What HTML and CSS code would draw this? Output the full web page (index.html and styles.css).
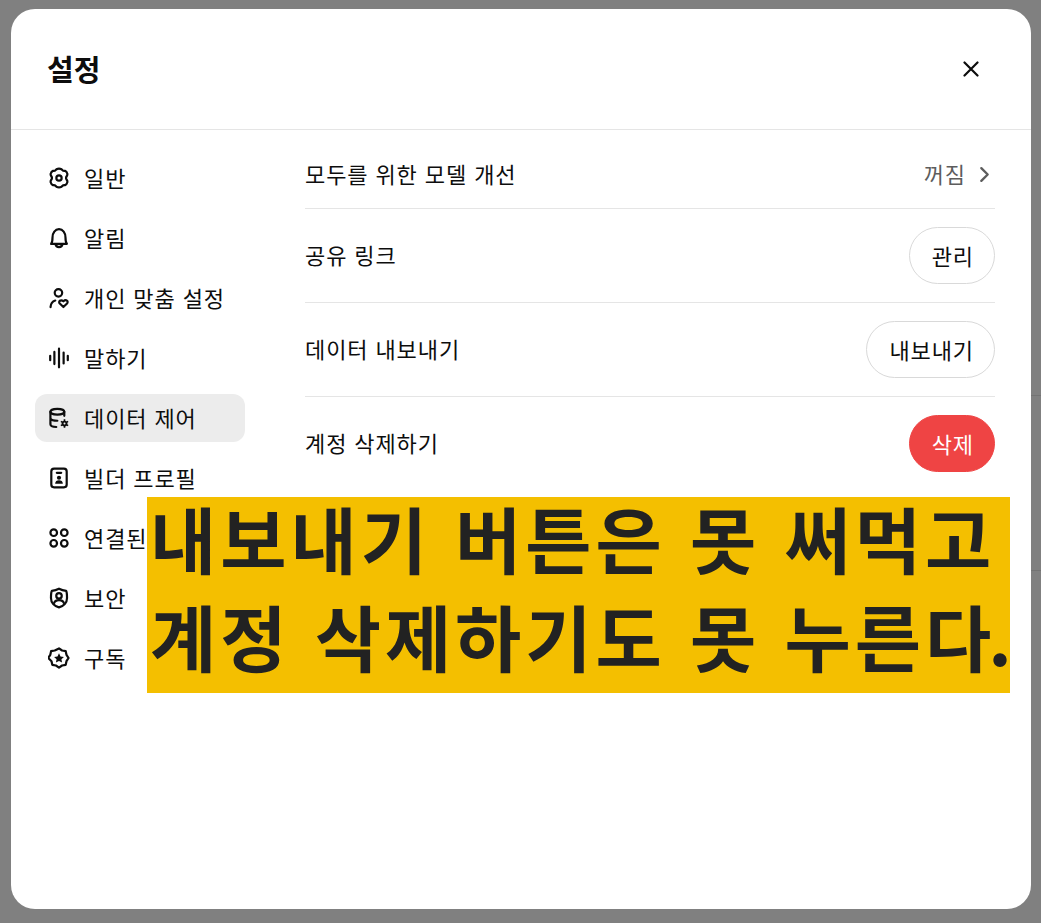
FILE: index.html
```html
<!DOCTYPE html>
<html lang="ko">
<head>
<meta charset="utf-8">
<title>설정</title>
<link rel="stylesheet" href="styles.css">
</head>
<body>
<div class="backdrop">
  <div class="bg-line bg-line-a"></div>
  <div class="bg-line bg-line-b"></div>
  <section class="modal">
    <header class="modal-head">
      <h1>설정</h1>
      <svg class="close" viewBox="0 0 16 16" width="16" height="16" fill="none" stroke="#0d0d0d" stroke-width="2.200" stroke-linecap="round"><path d="M1.500 1.500 14.500 14.500M14.500 1.500 1.500 14.500"/></svg>
    </header>
    <div class="modal-body">
      <nav class="side">
        <a class="nav-item"><svg class="ico" viewBox="0 0 20 20"><path d="M7.700 2.100c1.500-.8 3.100-.8 4.600 0l1 .9c.6.500 1.400.4 2.200.5 1 .3 1.600 1 2 2.400.3 1 .1 1.600-.4 2.300-.7.900-.7 2.700 0 3.600.5.700.7 1.300.4 2.300-.4 1.400-1 2.100-2 2.400-.8.100-1.600 0-2.200.5l-1 .9c-1.500.8-3.100.8-4.600 0l-1-.9c-.6-.5-1.400-.4-2.200-.5-1-.3-1.600-1-2-2.400-.3-1-.1-1.600.4-2.300.7-.9.7-2.700 0-3.600-.5-.7-.7-1.300-.4-2.300.4-1.400 1-2.100 2-2.400.8-.1 1.600 0 2.200-.5z" stroke-linejoin="round"/><circle cx="10" cy="10" r="2.400"/></svg><span>일반</span></a>
        <a class="nav-item"><svg class="ico" viewBox="0 0 20 20"><path d="M2.800 15.300h14.400c-1-1.200-1.300-2.700-1.300-5.800 0-4.300-2.400-7.500-5.900-7.500S4.100 5.200 4.100 9.500c0 3.100-.3 4.600-1.300 5.800z" stroke-linejoin="round"/><path d="M6.800 15.500c.3 1.800 1.500 2.800 3.200 2.800s2.900-1 3.200-2.800"/></svg><span>알림</span></a>
        <a class="nav-item"><svg class="ico" viewBox="0 0 20 20"><circle cx="9.500" cy="5.300" r="3.400"/><path d="M2.300 18.300c.2-3 1.700-5.200 4.300-6" stroke-linecap="round"/><path d="M14 18.200l-3.300-3.200c-1.700-1.800.9-4.200 3.300-2 2.400-2.200 5-.2 3.300 2z" stroke-linejoin="round"/></svg><span>개인 맞춤 설정</span></a>
        <a class="nav-item"><svg class="ico" viewBox="0 0 20 20"><path d="M2 8v4M5.800 4.500v11M10 1.500v17M14.200 5v10M18 8v4" stroke-linecap="round"/></svg><span>말하기</span></a>
        <a class="nav-item active"><svg class="ico" viewBox="0 0 20 20"><ellipse cx="8.500" cy="4.300" rx="6.300" ry="2.600"/><path d="M2.200 4.300v11.400c0 1.400 2 2.400 5.300 2.500M14.800 4.300v3.700M2.200 10.500c.8 1.300 3 2 6.300 2" stroke-linecap="round"/><circle class="solid" cx="15" cy="15" r="2.600"/><path d="M15 11.200v7.600M11.700 13.100l6.600 3.800M18.300 13.100l-6.600 3.800" stroke-width="1.500"/><circle class="hole" cx="15" cy="15" r=".9"/></svg><span>데이터 제어</span></a>
        <a class="nav-item"><svg class="ico" viewBox="0 0 20 20"><rect x="3" y="1.500" width="14" height="17" rx="2.500"/><path d="M8 5.300h4" stroke-linecap="round"/><circle class="solid" cx="10" cy="9.800" r="1.900"/><path class="solid" d="M6.500 15.300c0-2.200 1.500-3.200 3.500-3.200s3.500 1 3.500 3.200z"/></svg><span>빌더 프로필</span></a>
        <a class="nav-item"><svg class="ico" viewBox="0 0 20 20"><circle cx="5.200" cy="5.200" r="3"/><circle cx="14.800" cy="5.200" r="3"/><circle cx="5.200" cy="14.800" r="3"/><circle cx="14.800" cy="14.800" r="3"/></svg><span>연결된</span></a>
        <a class="nav-item"><svg class="ico" viewBox="0 0 20 20"><path d="M10 1.500c2 1 4.300 1.700 6.500 2 .6 1 .8 3.500.8 6.500 0 4.300-3.100 7.500-7.300 8.500C5.800 17.500 2.700 14.300 2.700 10c0-3 .2-5.500.8-6.500 2.200-.3 4.500-1 6.500-2z" stroke-linejoin="round"/><circle cx="10" cy="8" r="2.500"/><path d="M5.300 15.200c.6-2.200 2.400-3.200 4.700-3.200s4.100 1 4.700 3.200"/></svg><span>보안</span></a>
        <a class="nav-item"><svg class="ico" viewBox="0 0 20 20"><path d="M10 1.300l2.800 1.900 3.300.6.700 3.300 1.900 2.900-1.900 2.900-.7 3.300-3.300.6-2.800 1.900-2.800-1.900-3.300-.6-.7-3.300L.2 10l1.900-2.900.7-3.300 3.300-.6z" stroke-linejoin="round"/><path class="solid" d="M10 5.700l1.400 2.900 3.100.4-2.300 2.100.6 3.100-2.800-1.500-2.800 1.500.6-3.100L5.500 9l3.100-.4z"/></svg><span>구독</span></a>
      </nav>
      <main class="panel">
        <div class="row row-first">
          <span>모두를 위한 모델 개선</span>
          <span class="toggle"><span>꺼짐</span><svg viewBox="0 0 10 16" width="11" height="17" fill="none" stroke="#5d5d5d" stroke-width="2.200" stroke-linecap="round" stroke-linejoin="round"><path d="M2 2l6 6-6 6"/></svg></span>
        </div>
        <div class="row"><span>공유 링크</span><button class="btn">관리</button></div>
        <div class="row"><span>데이터 내보내기</span><button class="btn">내보내기</button></div>
        <div class="row row-last"><span>계정 삭제하기</span><button class="btn danger">삭제</button></div>
      </main>
    </div>
  </section>
  <div class="caption">
    <p>내보내기 버튼은 못 써먹고</p>
    <p>계정 삭제하기도 못 누른다<span class="dot">.</span></p>
  </div>
</div>
</body>
</html>
```
FILE: styles.css
```css
* { box-sizing: border-box; }
html, body { margin: 0; height: 100%; }
body {
  font-family: "Noto Sans CJK KR", "Noto Sans", sans-serif;
  color: #0d0d0d;
  overflow: hidden;
}
.backdrop {
  position: relative;
  width: 1041px;
  height: 923px;
  background: #808080;
  padding: 9px 10px 14px 11px;
}
.bg-line {
  position: absolute;
  right: 0;
  width: 10px;
  height: 1px;
  background: #737373;
}
.bg-line-a { top: 395px; }
.bg-line-b { top: 570px; }
.modal {
  position: relative;
  height: 900px;
  background: #fff;
  border-radius: 24px;
  overflow: hidden;
}
.modal-head {
  height: 121px;
  padding: 0 52px 0 36px;
  display: flex;
  align-items: center;
  justify-content: space-between;
  border-bottom: 1px solid #e5e5e5;
}
.modal-head h1 {
  margin: 0 0 2px;
  font-size: 29px;
  font-weight: 700;
  line-height: 36px;
}
.close { display: block; }
.modal-body { display: flex; }
.side {
  width: 294px;
  flex: none;
  padding: 24px 0 0 24px;
  display: flex;
  flex-direction: column;
  gap: 12px;
}
.nav-item {
  width: 210px;
  height: 48px;
  display: flex;
  align-items: center;
  gap: 14px;
  padding: 0 13px;
  border-radius: 12px;
  font-size: 22px;
  letter-spacing: .9px;
  white-space: nowrap;
}
.nav-item span { position: relative; top: -1.500px; }
.nav-item.active { background: #ececec; }
.ico {
  width: 22px;
  height: 22px;
  flex: none;
  fill: none;
  stroke: #0d0d0d;
  stroke-width: 2;
}
.ico .solid { fill: #0d0d0d; stroke: none; }
.ico .hole { fill: #ececec; stroke: none; }
.panel {
  width: 690px;
  padding-top: 12px;
  font-size: 22px;
  letter-spacing: .9px;
}
.row {
  height: 94px;
  display: flex;
  align-items: center;
  justify-content: space-between;
  border-bottom: 1px solid #e5e5e5;
}
.row > span:first-child { position: relative; top: -1.500px; }
.row-first { height: 67px; }
.row-first > span:first-child { top: -2px; }
.row-last { border-bottom-color: transparent; }
.toggle {
  display: flex;
  align-items: center;
  gap: 13px;
  color: #5d5d5d;
  padding-right: 5px;
}
.toggle span { position: relative; top: -2px; }
.toggle svg { position: relative; top: -1px; }
.btn {
  height: 57px;
  padding: 0 20px 2px 22px;
  border: 1px solid #d9d9d9;
  border-radius: 29px;
  background: #fff;
  color: #0d0d0d;
  font: inherit;
  letter-spacing: inherit;
}
.btn.danger {
  background: #ef4444;
  border-color: #ef4444;
  color: #fff;
}
.caption {
  position: absolute;
  left: 147px;
  top: 497px;
  width: 863px;
  height: 196px;
  background: #f4bf00;
  color: #222;
  font-weight: 700;
  font-size: 72px;
  letter-spacing: 4px;
  white-space: nowrap;
  padding-left: 3px;
}
.caption p { margin: 0; height: 98px; line-height: 80px; }
.dot { margin-left: -7px; }
```
